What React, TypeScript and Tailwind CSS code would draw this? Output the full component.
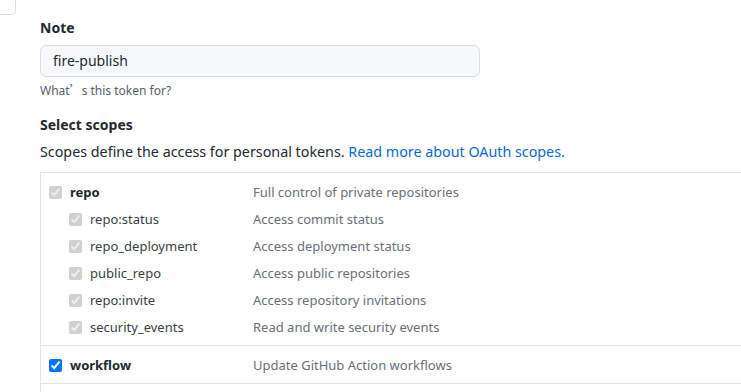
import React from 'react';

interface Scope {
  name: string;
  description: string;
}

const repoChildren: Scope[] = [
  { name: 'repo:status', description: 'Access commit status' },
  { name: 'repo_deployment', description: 'Access deployment status' },
  { name: 'public_repo', description: 'Access public repositories' },
  { name: 'repo:invite', description: 'Access repository invitations' },
  { name: 'security_events', description: 'Read and write security events' },
];

const ScopeRow = ({
  scope,
  child,
  bold,
  disabled,
}: {
  scope: Scope;
  child?: boolean;
  bold?: boolean;
  disabled?: boolean;
}) => (
  <div className="flex h-[27px] items-center">
    <div className={`flex w-[212px] items-center gap-2 ${child ? 'pl-[28px]' : 'pl-2'}`}>
      <input
        type="checkbox"
        checked
        readOnly
        disabled={disabled}
        className="h-[13px] w-[13px] shrink-0 accent-[#0075ff]"
      />
      <span className={bold ? 'font-bold text-[#24292f]' : 'text-[#3a3f45]'}>{scope.name}</span>
    </div>
    <span className="text-[#6a7078]">{scope.description}</span>
  </div>
);

export default function App() {
  return (
    <div
      className="relative h-[392px] w-[741px] overflow-hidden bg-white"
      style={{ fontFamily: '"Noto Sans", "Noto Sans CJK SC", sans-serif' }}
    >
      {/* sidebar corner */}
      <div className="h-[15px] w-[16px] rounded-br-[5px] border-r border-b border-[#d8dee4]" />

      <div className="w-[800px] pl-10 pt-[3px]">
        {/* Note */}
        <label className="mb-[7px] block text-sm leading-5 font-bold text-[#24292f]">Note</label>
        <div className="flex h-8 w-[440px] items-center rounded-md border border-[#d8dee4] bg-[#f6f8fa] px-3 text-sm text-[#24292f]">
          fire-publish
        </div>
        <p className="mt-[4px] text-xs leading-[18px] text-[#57606a]">
          What<span style={{ fontFamily: '"Noto Sans CJK SC", sans-serif' }}>’</span>s this token for?
        </p>

        {/* Scopes */}
        <h3 className="mt-[15px] text-sm leading-5 font-bold text-[#24292f]">Select scopes</h3>
        <p className="mt-[7px] text-[14.3px] leading-5 text-[#24292f]">
          Scopes define the access for personal tokens.{' '}
          <a className="text-[#0969da]">Read more about OAuth scopes.</a>
        </p>

        <div className="mt-[10px] border-t border-l border-[#e1e4e8] text-[13px]">
          <div className="border-b border-[#e1e4e8] pt-[6px] pb-[4px]">
            <ScopeRow scope={{ name: 'repo', description: 'Full control of private repositories' }} bold disabled />
            {repoChildren.map((s) => (
              <ScopeRow key={s.name} scope={s} child disabled />
            ))}
          </div>
          <div className="border-b border-[#e1e4e8] pt-[6px] pb-[4px]">
            <ScopeRow scope={{ name: 'workflow', description: 'Update GitHub Action workflows' }} bold />
          </div>
          <div className="h-[20px]" />
        </div>
      </div>
    </div>
  );
}
